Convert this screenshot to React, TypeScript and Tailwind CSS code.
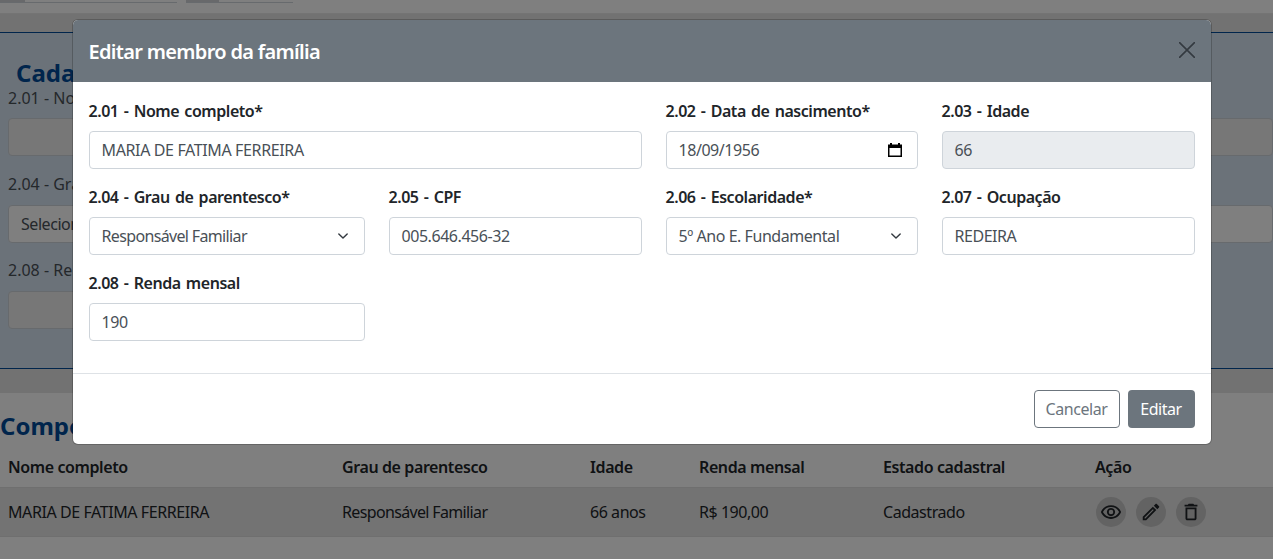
import { MdOutlineRemoveRedEye, MdOutlineEdit, MdOutlineDelete } from "react-icons/md";

const font = { fontFamily: '"Noto Sans", "Open Sans", sans-serif' };

function Label({ children }: { children: React.ReactNode }) {
  return <div className="text-[16px] leading-[24px] font-semibold tracking-[-0.45px] [word-spacing:1.5px] text-[#212529] mb-2 whitespace-nowrap">{children}</div>;
}

function Field({ label, value, disabled, className, icon, track }: { label: string; value: string; disabled?: boolean; className: string; icon?: React.ReactNode; track?: string }) {
  return (
    <div className={className}>
      <Label>{label}</Label>
      <div className={`h-[38px] rounded-[4px] border border-[#ced4da] px-3 flex items-center justify-between text-[16px] text-[#495057] whitespace-nowrap ${track ?? "tracking-[-0.45px]"} ${disabled ? "bg-[#e9ecef]" : "bg-white"}`}>
        <span>{value}</span>
        {icon}
      </div>
    </div>
  );
}

const Chevron = (
  <svg width="16" height="16" viewBox="0 0 16 16" className="mr-[1px]" fill="none" stroke="#343a40" strokeWidth="2" strokeLinecap="round" strokeLinejoin="round">
    <path d="M2 5l6 6 6-6" transform="translate(2.4 2.4) scale(0.7)" />
  </svg>
);

const Calendar = (
  <svg width="16" height="16" viewBox="0 0 16 16" className="mr-[2px]">
    <path d="M3 1h2v1.5h6V1h2v1.5h2V15H1V2.5h2V1zM2.5 6v7.5h11V6h-11z" fill="#000" />
  </svg>
);

export default function App() {
  const th = "text-[16px] leading-[24px] font-semibold tracking-[-0.4px] text-[#212529]";
  return (
    <div className="relative h-[559px] w-[1273px] overflow-hidden bg-white text-[#212529]" style={font}>
      {/* background page */}
      <div className="h-[14px] border-b border-[#e9e9e9] flex items-start gap-[9px]">
        <div className="flex h-[3px] w-[177px] border-b border-[#ced4da]"><div className="w-[25px] bg-[#d0d3d6]" /></div>
        <div className="flex h-[3px] w-[107px] border-b border-[#ced4da]"><div className="w-[33px] bg-[#d0d3d6]" /></div>
      </div>
      <div className="h-[18px] bg-[#e4e4e4]" />
      <div className="h-[337px] border-y border-[#004a99] bg-[#d7e4f2] pl-2">
        <div className="pl-2 pt-[22px] text-[24px] leading-[36px] font-bold text-[#004a99]">Cadastro</div>
        <div className="text-[16px] leading-[24px] text-[#495057] -mt-[5px]">2.01 - Nome completo*</div>
        <div className="mt-[8px] h-[38px] w-full rounded-[4px] border border-[#ced4da] bg-[#eeeeee]" />
        <div className="mt-[16px] text-[16px] leading-[24px] text-[#495057]">2.04 - Grau de parentesco*</div>
        <div className="mt-[9px] h-[38px] w-full rounded-[4px] border border-[#ced4da] bg-white px-3 flex items-center text-[16px] tracking-[-0.45px] text-[#495057]">Selecione</div>
        <div className="mt-[15px] text-[16px] leading-[24px] text-[#495057]">2.08 - Renda mensal</div>
        <div className="mt-[9px] h-[38px] w-[300px] rounded-[4px] border border-[#ced4da] bg-[#eeeeee]" />
      </div>
      <div className="h-[24px] bg-[#e4e4e4]" />
      <div>
        <div className="h-[62px] flex items-center text-[24px] font-bold text-[#004a99] pt-[4px]">Composição</div>
        <div className="h-[32px] flex items-start pl-2">
          <div className={`w-[334px] ${th}`}>Nome completo</div>
          <div className={`w-[248px] ${th}`}>Grau de parentesco</div>
          <div className={`w-[109px] ${th}`}>Idade</div>
          <div className={`w-[184px] ${th}`}>Renda mensal</div>
          <div className={`w-[212px] ${th}`}>Estado cadastral</div>
          <div className={th}>Ação</div>
        </div>
        <div className="h-[50px] bg-[#e6e6e6] border-y border-[#dedede] flex items-center pl-2 text-[16px] tracking-[-0.45px] text-[#212529]">
          <div className="w-[334px] tracking-[-0.42px]">MARIA DE FATIMA FERREIRA</div>
          <div className="w-[248px] tracking-[-0.65px]">Responsável Familiar</div>
          <div className="w-[109px]">66 anos</div>
          <div className="w-[184px]">R$ 190,00</div>
          <div className="w-[213px]">Cadastrado</div>
          <div className="flex gap-[10px]">
            {[<MdOutlineRemoveRedEye key="e" size={22} />, <MdOutlineEdit key="p" size={22} />, <MdOutlineDelete key="t" size={22} />].map((ic, i) => (
              <div key={i} className="w-[30px] h-[30px] rounded-full bg-[#c6c6c6] flex items-center justify-center">{ic}</div>
            ))}
          </div>
        </div>
      </div>

      {/* overlay */}
      <div className="absolute inset-0 bg-black/50" />

      {/* modal */}
      <div className="absolute inset-0 flex justify-center items-start pt-[20px] pl-[10px]">
        <div className="w-[1138px] h-[424px] bg-white ring-1 ring-black/20 rounded-[5px] overflow-hidden flex flex-col">
          <div className="h-[62px] bg-[#6c757d] flex items-center justify-between px-4 shrink-0">
            <div className="text-white text-[20px] font-semibold tracking-[-0.68px] mt-[1px]">Editar membro da família</div>
            <svg width="16" height="16" viewBox="0 0 16 16" className="mt-[-2px]" fill="none" stroke="#343a40" strokeWidth="1.6">
              <path d="M0 0l16 16M16 0L0 16" />
            </svg>
          </div>
          <div className="h-[292px] border-b border-[#dee2e6] px-4 pt-[17px] flex flex-col gap-[16px] shrink-0">
            <div className="flex gap-6">
              <Field className="w-[553px]" label="2.01 - Nome completo*" value="MARIA DE FATIMA FERREIRA" track="tracking-[-0.37px]" />
              <Field className="w-[252px]" label="2.02 - Data de nascimento*" value="18/09/1956" icon={Calendar} />
              <Field className="w-[253px]" label="2.03 - Idade" value="66" disabled />
            </div>
            <div className="flex gap-6">
              <Field className="w-[276px]" label="2.04 - Grau de parentesco*" value="Responsável Familiar" icon={Chevron} track="tracking-[-0.65px]" />
              <Field className="w-[253px]" label="2.05 - CPF" value="005.646.456-32" />
              <Field className="w-[252px]" label="2.06 - Escolaridade*" value="5º Ano E. Fundamental" icon={Chevron} />
              <Field className="w-[253px]" label="2.07 - Ocupação" value="REDEIRA" />
            </div>
            <div className="flex gap-6">
              <Field className="w-[276px]" label="2.08 - Renda mensal" value="190" />
            </div>
          </div>
          <div className="flex-1 flex items-start justify-end gap-2 px-4 pt-4">
            <button className="h-[38px] w-[86px] rounded-[4px] border border-[#6c757d] bg-white text-[16px] tracking-[-0.45px] text-[#6c757d]">Cancelar</button>
            <button className="h-[38px] w-[67px] rounded-[4px] bg-[#6c757d] text-[16px] tracking-[-0.45px] text-white">Editar</button>
          </div>
        </div>
      </div>
    </div>
  );
}
